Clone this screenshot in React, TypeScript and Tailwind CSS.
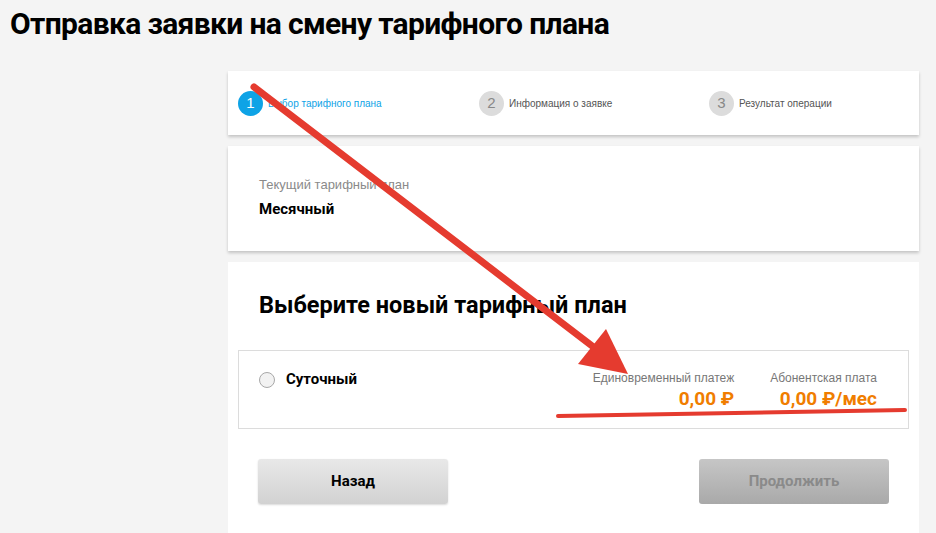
import React from 'react';

const steps = [
    { n: 1, label: 'Выбор тарифного плана', active: true, w: 'w-[241px]' },
    { n: 2, label: 'Информация о заявке', active: false, w: 'w-[230px]' },
    { n: 3, label: 'Результат операции', active: false, w: 'w-[200px]' },
];

export default function App() {
    return (
        <div className="relative w-[936px] h-[533px] overflow-hidden bg-[#f4f4f4] font-['Liberation_Sans',sans-serif]">
            <h1 className="pl-[10px] pt-[4px] h-[71px] text-[30px] leading-[40px] font-bold tracking-[-0.65px] text-black font-['Roboto',sans-serif]">
                Отправка заявки на смену тарифного плана
            </h1>

            <div className="ml-[228px] w-[691px] flex flex-col gap-[11px]">
                {/* Steps */}
                <div className="h-[64px] bg-white shadow-[0_2px_3px_rgba(0,0,0,0.2)] flex items-center pl-[10px]">
                    {steps.map((s) => (
                        <div key={s.n} className={`${s.w} flex items-center gap-[5px]`}>
                            <div
                                className={
                                    s.active
                                        ? 'w-[25px] h-[25px] rounded-full bg-[#0ea3e6] text-white flex items-center justify-center text-[15px]'
                                        : 'w-[25px] h-[25px] rounded-full bg-[#dcdcdc] text-[#888] flex items-center justify-center text-[15px]'
                                }
                            >
                                {s.n}
                            </div>
                            <span className={s.active ? 'text-[10px] text-[#0ea3e6]' : 'text-[10px] text-[#555]'}>
                                {s.label}
                            </span>
                        </div>
                    ))}
                </div>

                {/* Current plan */}
                <div className="h-[105px] bg-white shadow-[0_2px_3px_rgba(0,0,0,0.2)] pl-[31px] pt-[31px]">
                    <div className="text-[13px] leading-[16px] text-[#8a8a8a]">Текущий тарифный план</div>
                    <div className="mt-[7px] text-[15px] leading-[18px] font-bold text-black font-['Roboto',sans-serif]">Месячный</div>
                </div>

                {/* New plan */}
                <div className="h-[280px] bg-white px-[10px] pt-[28px]">
                    <h2 className="pl-[21px] text-[23.5px] leading-[30px] font-bold text-black font-['Roboto',sans-serif]">
                        Выберите новый тарифный план
                    </h2>
                    <div className="mt-[30px] h-[79px] border border-[#dcdcdc] flex pl-[20px] pr-[31px]">
                        <div className="flex items-center gap-[11px] h-[57px]">
                            <div className="w-[16px] h-[16px] rounded-full border border-[#a8a8a8] bg-[#f2f2f2]" />
                            <span className="text-[15px] font-bold text-black font-['Roboto',sans-serif]">Суточный</span>
                        </div>
                        <div className="ml-auto flex gap-[36px] pt-[20px]">
                            <div className="flex flex-col items-end">
                                <span className="text-[12px] leading-[14px] text-[#777]">Единовременный платеж</span>
                                <span className="mt-[3px] text-[19px] leading-[22px] font-bold text-[#f07d00] font-['Roboto',sans-serif]">0,00 ₽</span>
                            </div>
                            <div className="flex flex-col items-end">
                                <span className="text-[12px] leading-[14px] text-[#777]">Абонентская плата</span>
                                <span className="mt-[3px] text-[19px] leading-[22px] font-bold text-[#f07d00] font-['Roboto',sans-serif]">0,00 ₽/мес</span>
                            </div>
                        </div>
                    </div>
                    <div className="mt-[30px] flex justify-between px-[20px]">
                        <button className="w-[190px] h-[45px] rounded-[3px] bg-gradient-to-b from-[#e8e8e8] to-[#d2d2d2] shadow-[0_1px_2px_rgba(0,0,0,0.15)] text-[15px] font-bold text-black font-['Roboto',sans-serif]">
                            Назад
                        </button>
                        <button className="w-[190px] h-[45px] rounded-[3px] bg-gradient-to-b from-[#c6c6c6] to-[#a9a9a9] text-[15px] font-bold text-[#8a8a8a] font-['Roboto',sans-serif]">
                            Продолжить
                        </button>
                    </div>
                </div>
            </div>

            {/* Annotation overlay */}
            <svg className="absolute inset-0 pointer-events-none" width="936" height="533" viewBox="0 0 936 533">
                <line x1="254" y1="87" x2="600" y2="352" stroke="#e53b2f" strokeWidth="7" strokeLinecap="round" />
                <polygon points="628,374 578,364 606,329" fill="#e53b2f" />
                <path d="M558 416 Q 730 413 905 410" stroke="#e53b2f" strokeWidth="4" fill="none" strokeLinecap="round" />
            </svg>
        </div>
    );
}
